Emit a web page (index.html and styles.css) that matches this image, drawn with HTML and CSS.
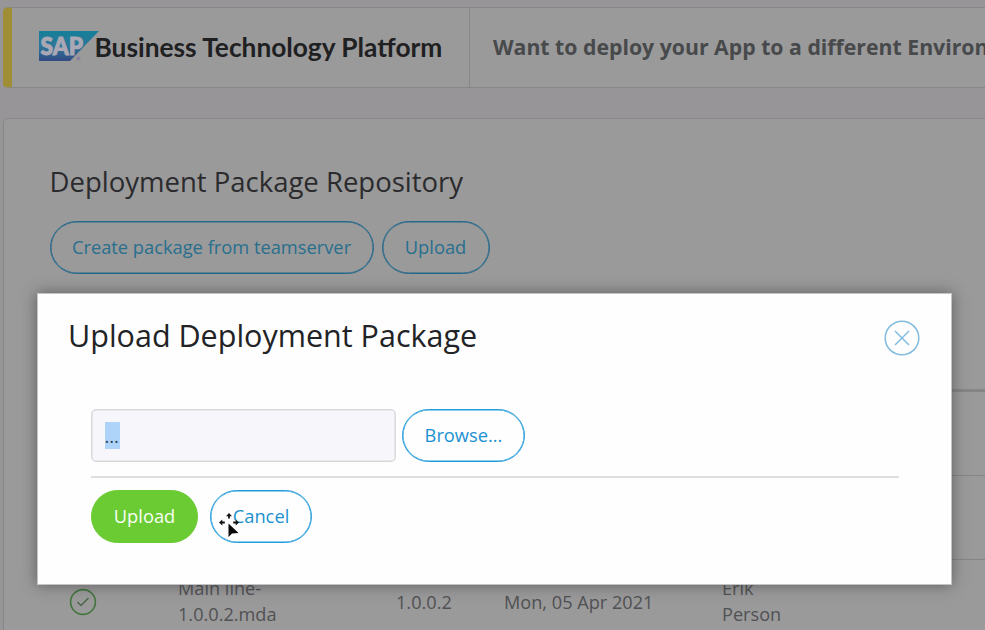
FILE: index.html
```html
<!DOCTYPE html>
<html lang="en">
<head>
<meta charset="utf-8">
<title>Deployment Package Repository</title>
<link rel="stylesheet" href="styles.css">
</head>
<body>
<main class="page">
  <section class="banner">
    <div class="brand">
      <svg class="sap" width="62" height="34" viewBox="0 0 62 34">
        <defs><linearGradient id="sapfill" x1="0" y1="0" x2="0" y2="1"><stop offset="0" stop-color="#157f99"/><stop offset=".5" stop-color="#2d7799"/><stop offset="1" stop-color="#324b84"/></linearGradient></defs>
        <path d="M0 0H60L31 30H0Z" fill="url(#sapfill)"/>
        <text x="1.500" y="24" textLength="42.500" lengthAdjust="spacingAndGlyphs" class="sap-text">SAP</text>
        <circle cx="39.500" cy="27.500" r="2" fill="#8c829f"/>
      </svg>
      <span class="brand-name">Business Technology Platform</span>
    </div>
    <p class="question">Want to deploy your App to a different Environment?</p>
  </section>

  <section class="card">
    <h2 class="card-title">Deployment Package Repository</h2>
    <div class="actions">
      <button class="btn dim create">Create package from teamserver</button>
      <button class="btn dim up">Upload</button>
    </div>
    <div class="table">
      <div class="row head"></div>
      <div class="row"></div>
      <div class="row"></div>
      <div class="row">
        <svg class="check" width="28" height="28" viewBox="0 0 28 28"><circle cx="14" cy="14" r="12.400"/><path d="M8.500 14.200L12 17.500L19.500 10"/></svg>
        <span class="name">Main line-<br>1.0.0.2.mda</span>
        <span class="version">1.0.0.2</span>
        <span class="date">Mon, 05 Apr 2021</span>
        <span class="person">Erik<br>Person</span>
      </div>
    </div>
  </section>
</main>

<div class="modal" role="dialog">
  <header class="modal-head">
    <h1 class="modal-title">Upload Deployment Package</h1>
    <svg class="close" width="36" height="36" viewBox="0 0 36 36"><circle cx="18" cy="18" r="16.800"/><path d="M11 11L25 25M25 11L11 25"/></svg>
  </header>
  <div class="form">
    <div class="file-row">
      <div class="field"><span class="selected">...</span></div>
      <button class="btn browse">Browse...</button>
    </div>
    <div class="form-actions">
      <button class="btn primary">Upload</button>
      <button class="btn cancel">Cancel</button>
    </div>
  </div>
  <svg class="cursor" width="24" height="26" viewBox="0 0 24 26">
    <path class="halo" d="M9 3h4M11 1v4M3 9.500h3M4 7.500v4M16 9.500h3M18 7.500v4"/>
    <path class="arrows" d="M11 0L14 3.300H11.900V5.500H10.100V3.300H8ZM1 9.500L4.300 6.500V8.600H6.800V10.400H4.300V12.500ZM21 9.500L17.700 6.500V8.600H15.200V10.400H17.700V12.500Z"/>
    <path class="pointer" d="M10.500 10.500V24L14 20.500L20.500 20Z"/>
  </svg>
</div>
</body>
</html>
```
FILE: styles.css
```css
* { box-sizing: border-box; }
body {
  margin: 0;
  width: 985px;
  height: 630px;
  overflow: hidden;
  position: relative;
  background: #979597;
  font-family: "Open Sans", sans-serif;
}
h1, h2, p { margin: 0; font-weight: 400; }
.page { padding: 7px 0 0 3px; height: 630px; overflow: hidden; }

.banner {
  display: flex;
  width: 1100px;
  height: 81px;
  border: 1px solid #868887;
  border-left: 9px solid #a08e37;
  border-radius: 5px;
  background: #9a9a9b;
}
.brand {
  display: flex;
  flex: none;
  width: 458px;
  border-right: 1px solid #858687;
  padding: 23px 0 0 27px;
}
.sap { flex: none; }
.sap-text { font: 900 25px Lato, sans-serif; fill: #aaa8b4; stroke: #aaa8b4; stroke-width: 1; }
.brand-name {
  margin-left: -6.500px;
  font: 700 26.300px/32px Lato, sans-serif;
  color: #1f2022;
  white-space: nowrap;
}
.question {
  padding-left: 23px;
  font-size: 21.250px;
  line-height: 78px;
  font-weight: 700;
  color: #48494b;
  white-space: nowrap;
}

.card {
  width: 1100px;
  height: 620px;
  margin-top: 30px;
  padding: 43px 0 0 46px;
  border: 1px solid #868887;
  border-radius: 5px;
  background: #9a9a9b;
}
.card-title { margin-left: -0.500px; font-size: 27.500px; line-height: 40px; color: #2b2b2e; white-space: nowrap; }
.actions { display: flex; gap: 8px; margin: 19px 0 0 -0.500px; }
.btn {
  height: 53px;
  padding: 0 0 2px;
  border: 1px solid #219bd9;
  border-radius: 27px;
  box-shadow: inset 0 0 0 0.500px #219bd9;
  background: transparent;
  color: #1b91d1;
  font-family: inherit;
  font-size: 18.300px;
  white-space: nowrap;
}
.dim { border-color: #24688a; color: #286f8d; box-shadow: inset 0 0 0 0.500px #24688a; }
.create { width: 324px; }
.up { width: 108px; }
.table { margin-top: 30px; }
.row {
  display: flex;
  align-items: center;
  height: 84px;
  border-bottom: 1px solid #858586;
  font-size: 18.150px;
  line-height: 26px;
  color: #515153;
}
.head { height: 88px; border-bottom: 3px solid #858586; }
.check { margin-left: 19px; fill: none; stroke: #40763b; stroke-width: 1.600; }
.check path { stroke: #52694f; }
.name { margin-left: 81px; width: 218px; }
.name, .person { padding-bottom: 2px; }
.version { width: 108px; }
.date { width: 218px; }

.modal {
  position: absolute;
  left: 37px;
  top: 293px;
  width: 915px;
  height: 292px;
  padding: 21px 31px 0 30px;
  background: #fefefe;
  border: 1px solid #c4c4c5;
  box-shadow: 0 0 14px rgba(45, 45, 48, .55);
}
.modal-head { display: flex; justify-content: space-between; }
.modal-title { font-size: 30.500px; line-height: 40px; height: 41px; color: #222326; white-space: nowrap; }
.close { margin-top: 5px; fill: none; stroke: #82bddf; stroke-width: 1.500; }
.form { width: 808px; margin: 53px 0 0 23px; }
.file-row {
  display: flex;
  gap: 6px;
  height: 69px;
  border-bottom: 2px solid #dedee0;
}
.field {
  width: 305px;
  height: 53px;
  padding: 12px 0 0 12.500px;
  border: 1px solid #d9d9dc;
  border-radius: 5px;
  box-shadow: inset 0 0 0 0.500px #d9d9dc;
  background: #f7f6fa;
}
.selected {
  display: block;
  width: 15px;
  height: 27px;
  background: #aed4fa;
  color: #31445a;
  font-size: 18.300px;
  line-height: 28px;
}
.browse { width: 123px; }
.form-actions { display: flex; gap: 12px; margin-top: 12px; }
.primary { width: 107px; background: #6acb32; border-color: #6acb32; box-shadow: none; color: #fafff6; }
.cancel { width: 102px; }
.cursor { position: absolute; left: 180px; top: 219px; }
.halo { stroke: #fff; stroke-width: 4; fill: none; }
.arrows { fill: #111; }
.pointer { fill: #080808; stroke: #fff; stroke-width: 1; paint-order: stroke; }
```
